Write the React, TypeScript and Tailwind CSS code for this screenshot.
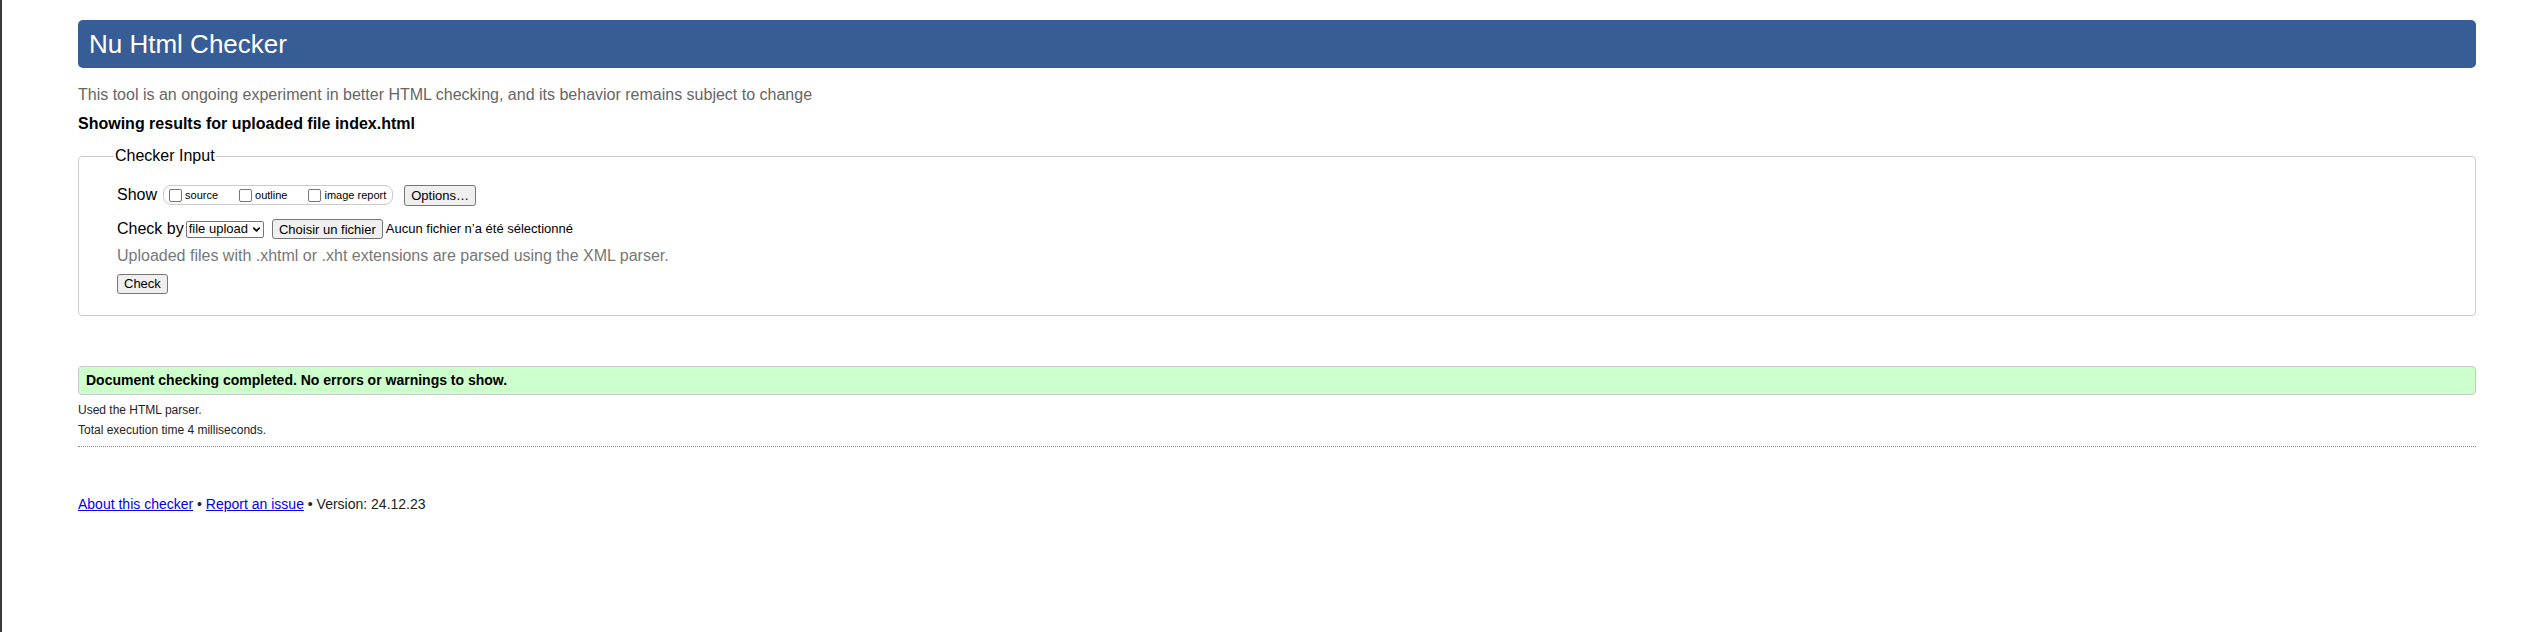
import { ChevronDown } from "lucide-react";

const font = { fontFamily: '"Liberation Sans", Arial, sans-serif' };

const NativeButton = ({ children, className = "" }: { children: React.ReactNode; className?: string }) => (
  <span
    className={
      "inline-flex items-center justify-center bg-[#efefef] border border-[#767676] rounded-[3px] text-[13px] text-black leading-none " +
      className
    }
  >
    {children}
  </span>
);

const Checkbox = ({ label }: { label: string }) => (
  <span className="inline-flex items-center gap-[3px]">
    <span className="w-[13px] h-[13px] border border-[#767676] rounded-[2px] bg-white" />
    <span className="text-[11px] text-black">{label}</span>
  </span>
);

export default function App() {
  return (
    <div style={font} className="min-h-[632px] bg-white border-l-2 border-[#3a3a3a] text-[#222]">
      <div className="ml-[76px] w-[2398px] pt-[20px]">
        <h1 className="h-[48px] flex items-center px-[11px] bg-[#365d95] rounded-[5px] text-white text-[26px] font-normal">
          Nu Html Checker
        </h1>

        <p className="mt-[17px] text-[16px] leading-[20px] text-[#666]">
          This tool is an ongoing experiment in better HTML checking, and its behavior remains subject to change
        </p>
        <p className="mt-[9px] text-[16px] leading-[20px] font-bold text-black">
          Showing results for uploaded file index.html
        </p>

        <fieldset className="mt-[12px] border border-[#ccc] rounded-[4px] px-[38px] pb-[20px]">
          <legend className="-ml-[3px] px-[1px] text-[16px] leading-[20px] text-black">Checker Input</legend>

          <div className="mt-[18px] flex items-center h-[22px]">
            <span className="text-[16px] text-black mr-[6px]">Show</span>
            <span className="flex items-center h-[20px] gap-[21px] border border-[#ccc] rounded-[8px] pl-[5px] pr-[6px]">
              <Checkbox label="source" />
              <Checkbox label="outline" />
              <Checkbox label="image report" />
            </span>
            <NativeButton className="ml-[11px] h-[21px] px-[6px]">Options…</NativeButton>
          </div>

          <div className="mt-[12px] flex items-center h-[22px]">
            <span className="text-[16px] text-black mr-[2px]">Check by</span>
            <span className="inline-flex items-center h-[17px] border border-[#767676] rounded-[2px] bg-white pl-[2px] pr-[1px] text-[13px] text-black">
              file upload
              <ChevronDown className="w-[11px] h-[11px] ml-[3px]" strokeWidth={3.5} />
            </span>
            <NativeButton className="ml-[8px] h-[20px] px-[6px]">Choisir un fichier</NativeButton>
            <span className="ml-[3px] text-[13px] text-black">Aucun fichier n’a été sélectionné</span>
          </div>

          <p className="mt-[6px] text-[16px] leading-[20px] text-[#777]">
            Uploaded files with .xhtml or .xht extensions are parsed using the XML parser.
          </p>

          <div className="mt-[5px]">
            <NativeButton className="h-[20px] px-[6px]">Check</NativeButton>
          </div>
        </fieldset>

        <div className="mt-[50px] h-[29px] flex items-center px-[7px] bg-[#ccffcc] border border-[#c8c8c8] rounded-[4px] text-[14px] font-bold text-black">
          Document checking completed. No errors or warnings to show.
        </div>
        <p className="mt-[5px] text-[12px] leading-[20px] text-[#222]">Used the HTML parser.</p>
        <p className="text-[12px] leading-[20px] text-[#222]">Total execution time 4 milliseconds.</p>
        <div className="mt-[6px] border-t border-dotted border-[#888]" />

        <p className="mt-[47px] text-[14px] leading-[20px] text-[#222]">
          <a href="#" className="text-[#0000ee] underline">About this checker</a>
          {" • "}
          <a href="#" className="text-[#0000ee] underline">Report an issue</a>
          {" • Version: 24.12.23"}
        </p>
      </div>
    </div>
  );
}
